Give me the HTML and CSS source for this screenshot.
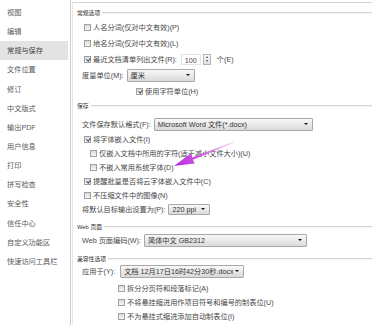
FILE: index.html
```html
<!DOCTYPE html>
<html lang="zh-CN">
<head>
    <meta charset="UTF-8">
    <meta name="viewport" content="width=device-width, initial-scale=1.0">
    <title>选项 - 常规与保存</title>
    <link rel="stylesheet" href="styles.css">
</head>
<body>
    <div class="dialog">
        <!-- Lista lateral de categorías -->
        <ul class="nav">
            <li>视图</li>
            <li>编辑</li>
            <li class="active">常规与保存</li>
            <li>文件位置</li>
            <li>修订</li>
            <li>中文版式</li>
            <li>输出PDF</li>
            <li>用户信息</li>
            <li>打印</li>
            <li>拼写检查</li>
            <li>安全性</li>
            <li>信任中心</li>
            <li>自定义功能区</li>
            <li>快速访问工具栏</li>
        </ul>

        <div class="panel">
            <div class="group group-general">
                <div class="group-title"><span>常规选项</span></div>
                <div class="row check-row"><span class="check"></span>人名分词(仅对中文有效)(P)</div>
                <div class="row check-row"><span class="check"></span>地名分词(仅对中文有效)(L)</div>
                <div class="row check-row">
                    <span class="check on"></span>最近文档清单列出文件(R):
                    <span class="number">100</span>
                    <span class="spin"><i class="up"></i><i class="down"></i></span>
                    <span class="unit">个(E)</span>
                </div>
                <div class="row">度量单位(M):<span class="select w-unit">厘米</span></div>
                <div class="row sub-unit"><span class="check on"></span>使用字符单位(H)</div>
            </div>

            <div class="group group-save">
                <div class="group-title"><span>保存</span></div>
                <div class="row tall">文件保存默认格式(F):<span class="select w-format">Microsoft Word 文件(*.docx)</span></div>
                <div class="row check-row"><span class="check on"></span>将字体嵌入文件(I)</div>
                <div class="row sub"><span class="check"></span>仅嵌入文档中所用的字符(适于减小文件大小)(U)</div>
                <div class="row sub"><span class="check"></span>不嵌入常用系统字体(D)</div>
                <div class="row check-row"><span class="check on"></span>提醒批量是否将云字体嵌入文件中(C)</div>
                <div class="row check-row"><span class="check"></span>不压缩文件中的图像(N)</div>
                <div class="row">将默认目标输出设置为(P):<span class="select w-ppi">220 ppi</span></div>
            </div>

            <div class="group group-web">
                <div class="group-title"><span>Web 页面</span></div>
                <div class="row tall">Web 页面编码(W):<span class="select w-enc">简体中文 GB2312</span></div>
            </div>

            <div class="group group-compat">
                <div class="group-title"><span>兼容性选项</span></div>
                <div class="row tall">应用于(Y):<span class="select w-doc">文档 12月17日16时42分30秒.docx</span></div>
                <div class="row sub-compat"><span class="check"></span>拆分分页符和段落标记(A)</div>
                <div class="row sub-compat"><span class="check"></span>不将悬挂缩进用作项目符号和编号的制表位(U)</div>
                <div class="row sub-compat"><span class="check"></span>不为悬挂式缩进添加自动制表位(I)</div>
            </div>
        </div>
    </div>

    <!-- Flecha de anotación encima del diálogo -->
    <svg class="arrow" width="372" height="325" viewBox="0 0 372 325">
        <defs>
            <linearGradient id="arrowFill" x1="234" y1="142" x2="174" y2="166" gradientUnits="userSpaceOnUse">
                <stop offset="0" stop-color="#f3b6f3" stop-opacity="0.5"/>
                <stop offset="0.5" stop-color="#d65ae0"/>
                <stop offset="1" stop-color="#b42fe0"/>
            </linearGradient>
        </defs>
        <polygon fill="url(#arrowFill)" points="233.8,141.6 192.2,157.4 190.6,153.6 174,166 194.6,163.4 193,159.8 234.2,142.4"/>
    </svg>
</body>
</html>
```

FILE: styles.css
```css
/* Base */
body {
    margin: 0;
    width: 372px;
    height: 325px;
    overflow: hidden;
    position: relative;
    background-color: #ffffff;
    font-family: "Liberation Sans", "Noto Sans CJK SC", sans-serif;
    font-size: 7.2px;
    color: #474747;
}

.dialog {
    display: flex;
    height: 325px;
}

/* Lista lateral */
.nav {
    list-style: none;
    margin: 0;
    padding: 3px 0 0;
    width: 70px;
    flex: none;
    border-right: 1px solid #c9c9c9;
}
.nav li {
    height: 19.15px;
    line-height: 19.15px;
    margin-right: 2px;
    padding-left: 7px;
    color: #5a5a5a;
    white-space: nowrap;
}
.nav li.active {
    background-color: #e3e3e3;
    color: #444444;
}

/* Panel derecho */
.panel {
    flex: 1;
    margin: 2px 0 0 1px;
    border-top: 1px solid #d4d4d4;
    border-left: 1px solid #e6e6e6;
    min-width: 0;
}

.group-title {
    display: flex;
    align-items: center;
    height: 10px;
    padding-left: 4px;
    font-size: 5.8px;
    color: #333333;
    white-space: nowrap;
}
.group-title::after {
    content: "";
    flex: 1;
    height: 1px;
    margin-left: 2px;
    background-color: #d3d3d3;
    box-shadow: 0 1px 0 #f4f4f4;
}

.group-general .group-title { margin: 4px 0 2px; }
.group-save .group-title { margin: 1px 0 6px; }
.group-web .group-title { margin: 5px 0 1px; }
.group-compat .group-title { margin: 5px 0 0; }

.row {
    display: flex;
    align-items: center;
    height: 14px;
    padding-left: 9px;
    white-space: nowrap;
}
.group-general .row { height: 16px; }
.row.tall { height: 16px; }
.group-compat .row.tall { margin-bottom: 2px; }

.check-row { padding-left: 11px; }
.sub { padding-left: 17px; }
.sub-unit { padding-left: 63px; }
.sub-compat { padding-left: 45px; }

/* Casillas */
.check {
    position: relative;
    width: 7px;
    height: 7px;
    box-sizing: border-box;
    margin-right: 2px;
    border: 1px solid #a0a0a0;
    background: linear-gradient(#dadada, #f7f7f7);
    flex: none;
}
.check.on::after {
    content: "";
    position: absolute;
    left: 1.5px;
    top: 0;
    width: 1.5px;
    height: 3px;
    border-right: 1px solid #3a4666;
    border-bottom: 1px solid #3a4666;
    transform: rotate(40deg);
}

/* Campo numérico */
.number {
    width: 20px;
    height: 11px;
    line-height: 11px;
    margin-left: 4px;
    padding-left: 3px;
    border: 1px solid #e4e4e4;
    box-sizing: border-box;
}
.spin {
    display: flex;
    flex-direction: column;
    justify-content: space-around;
    align-items: center;
    width: 8px;
    height: 11px;
    margin-left: 2px;
    border: 1px solid #b3b3b3;
    box-sizing: border-box;
    background: linear-gradient(#fafafa, #e2e2e2);
}
.spin i {
    width: 0;
    height: 0;
    border-left: 1.5px solid transparent;
    border-right: 1.5px solid transparent;
}
.spin .up { border-bottom: 2px solid #444444; }
.spin .down { border-top: 2px solid #444444; }
.unit { margin-left: 6px; }

/* Listas desplegables */
.select {
    display: flex;
    align-items: center;
    height: 13px;
    margin-left: 3px;
    padding-left: 3px;
    box-sizing: border-box;
    border: 1px solid #a8a8a8;
    border-radius: 1px;
    background: linear-gradient(#f8f8f8, #dadada);
    color: #333333;
    overflow: hidden;
}
.select::after {
    content: "";
    margin-left: auto;
    margin-right: 4px;
    border-left: 2px solid transparent;
    border-right: 2px solid transparent;
    border-top: 2px solid #111111;
}
.w-unit { width: 68px; }
.w-format { width: 159px; }
.w-ppi { width: 42px; height: 11px; }
.w-enc { width: 163px; }
.w-doc { width: 124px; margin-left: 5px; }

/* Flecha */
.arrow {
    position: absolute;
    left: 0;
    top: 0;
    pointer-events: none;
}
```
